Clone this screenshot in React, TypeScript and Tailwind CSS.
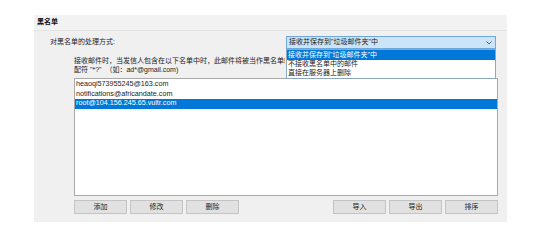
import React from "react";

const font = "font-['Liberation_Sans','Noto_Sans_CJK_SC',sans-serif]";

function Btn({ label }: { label: string }) {
  return (
    <div className="w-[53px] h-[14px] flex items-center justify-center bg-[#e1e1e1] border border-[#c4c4c4] text-[7px] text-[#222]">
      {label}
    </div>
  );
}

export default function App() {
  const emails = [
    "heaoqi573955245@163.com",
    "notifications@africandate.com",
    "root@104.156.245.65.vultr.com",
  ];
  return (
    <div className={`w-[546px] h-[239px] bg-white pt-[15px] pl-[34px] ${font}`}>
      <div className="w-[473px] h-[207px] bg-[#f0f0f0] flex flex-col">
        <div className="h-[16px] border-b border-[#e2e2e2] bg-[#f2f2f2] pl-[3px] flex items-center text-[7px] font-bold text-[#111]">
          黑名单
        </div>
        <div className="flex items-center mt-[5px] pr-[11px]">
          <span className="ml-[16px] text-[7px] text-[#222]">对黑名单的处理方式:</span>
          <div className="ml-auto relative w-[210px] h-[13px]">
            <div className="w-full h-full bg-[#cce4f7] border border-[#6fa8dc] flex items-center pl-[2px] text-[7px] text-[#222]">
              <span>接收并保存到"垃圾邮件夹"中</span>
              <svg className="ml-auto mr-[3px]" width="6" height="4" viewBox="0 0 6 4">
                <path d="M0.5 0.5 L3 3 L5.5 0.5" fill="none" stroke="#555" strokeWidth="0.9" />
              </svg>
            </div>
            <div className="absolute left-0 top-full w-[210px] bg-white border border-[#8ca6c6] z-10 text-[7px] text-[#222]">
              <div className="h-[10px] bg-[#0078d7] text-white pl-[1px] flex items-center">接收并保存到"垃圾邮件夹"中</div>
              <div className="h-[9px] pl-[1px] flex items-center">不接收黑名单中的邮件</div>
              <div className="h-[9px] pl-[1px] flex items-center">直接在服务器上删除</div>
            </div>
          </div>
        </div>
        <div className="mt-[7px] ml-[40px] mr-[9px] text-[7px] leading-[9px] text-[#222]">
          <div className="w-[211px] whitespace-nowrap overflow-hidden">
            接收邮件时，当发信人包含在以下名单中时，此邮件将被当作黑名单邮件处理，支持通
          </div>
          <div className="whitespace-nowrap">配符 "*?"&nbsp;&nbsp;（如：ad*@gmail.com)</div>
        </div>
        <div className="mt-[4px] ml-[40px] mr-[9px] h-[118px] bg-white border border-[#a9a9a9] pt-[1px]">
          {emails.map((e, i) => (
            <div
              key={e}
              className={`h-[9.5px] pl-[1px] flex items-center text-[7.2px] ${
                i === 2 ? "bg-[#0078d7] text-white" : "text-[#222]"
              }`}
            >
              {e}
            </div>
          ))}
        </div>
        <div className="mt-[4px] ml-[40px] mr-[9px] flex justify-between">
          <div className="flex gap-[3px]">
            <Btn label="添加" />
            <Btn label="修改" />
            <Btn label="删除" />
          </div>
          <div className="flex gap-[3px]">
            <Btn label="导入" />
            <Btn label="导出" />
            <Btn label="排序" />
          </div>
        </div>
      </div>
    </div>
  );
}
